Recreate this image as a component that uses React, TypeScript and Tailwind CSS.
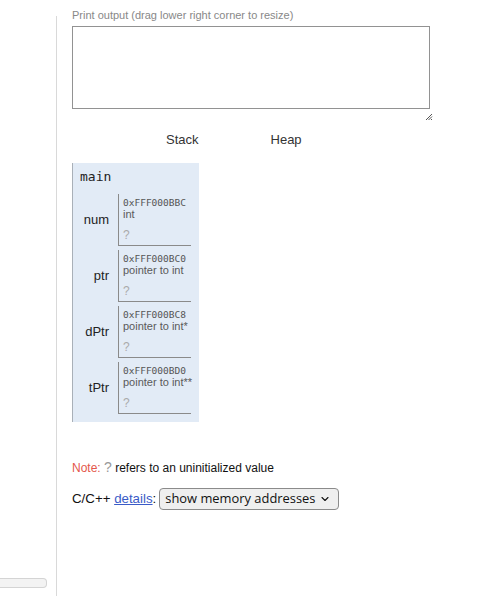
import { ChevronDown } from "lucide-react";

type Slot = {
  name: string;
  addr: string;
  type: string;
};

const slots: Slot[] = [
  { name: "num", addr: "0xFFF000BBC", type: "int" },
  { name: "ptr", addr: "0xFFF000BC0", type: "pointer to int" },
  { name: "dPtr", addr: "0xFFF000BC8", type: "pointer to int*" },
  { name: "tPtr", addr: "0xFFF000BD0", type: "pointer to int**" },
];

const sans = "font-['Liberation_Sans',Arial,sans-serif]";
const mono = "font-['DejaVu_Sans_Mono',monospace]";

function StackFrame() {
  return (
    <div className="w-[127px] bg-[#e2ebf6] border-l border-[#a9b0b8] pb-[8px]">
      <div className={`${mono} text-[13px] leading-[16px] text-[#222] pl-[7px] pt-[6px]`}>
        main
      </div>
      <div className="flex flex-col gap-[4px] mt-[9px]">
        {slots.map((s) => (
          <div key={s.name} className="flex items-center">
            <div className={`${sans} w-[45px] pr-[9px] text-right text-[13px] text-[#222]`}>
              {s.name}
            </div>
            <div className="w-[73px] h-[52px] border-l border-b border-[#8a8a8a] pl-[4px] pt-[3px]">
              <div className={`${mono} text-[9.5px] leading-[11px] text-[#555]`}>
                {s.addr}
              </div>
              <div className={`${sans} text-[11px] leading-[13px] text-[#5a5a5a] whitespace-nowrap`}>
                {s.type}
              </div>
              <div className={`${sans} text-[12px] leading-[14px] text-[#aaa] mt-[7px]`}>
                ?
              </div>
            </div>
          </div>
        ))}
      </div>
    </div>
  );
}

export default function App() {
  return (
    <div className={`${sans} flex h-[596px] w-[504px] overflow-hidden bg-white`}>
      <div className="w-[57px] shrink-0 mt-[16px] border-r border-[#d9d9d9] flex flex-col justify-end pb-[8px]">
        <div className="h-[10px] w-[47px] bg-[#f3f3f3] border border-l-0 border-[#d4d4d4] rounded-r-[4px]"></div>
      </div>

      <div className="pl-[15px] flex flex-col">
        <div className="text-[11px] leading-[13px] text-[#888] mt-[9px]">
          Print output (drag lower right corner to resize)
        </div>
        <div className="mt-[4px] w-[358px] h-[83px] border border-[#929292]"></div>
        <div className="w-[361px] flex justify-end mt-[4px] h-[8px]">
          <svg width="8" height="8" viewBox="0 0 8 8">
            <path d="M7 1 L1 7 M7 3.5 L3.5 7 M7 6 L6 7" stroke="#555" strokeWidth="1" />
          </svg>
        </div>

        <div className="flex text-[13px] leading-[15px] text-[#333] mt-[11px]">
          <div className="ml-[94px]">Stack</div>
          <div className="ml-[72px]">Heap</div>
        </div>

        <div className="mt-[16px]">
          <StackFrame />
        </div>

        <div className="mt-[38px] text-[12px] leading-[14px] text-[#111]">
          <span className="text-[#e4574c]">Note: </span>
          <span className="text-[#999] text-[14px]">?</span> refers to an uninitialized value
        </div>

        <div className="mt-[13px] flex items-center text-[13.3px] text-[#111]">
          <span>C/C++&nbsp;</span>
          <a href="#" className="text-[#3a5bc7] underline">
            details
          </a>
          <span>:</span>
          <div className="ml-[3px] h-[22px] w-[180px] border border-[#8b8b8b] rounded-[4px] bg-[#efefef] flex items-center pl-[5px] pr-[7px] font-['Open_Sans',sans-serif] text-[12.9px] text-[#111] whitespace-nowrap">
            <span className="flex-1">show memory addresses</span>
            <ChevronDown size={12} strokeWidth={2.2} className="shrink-0" />
          </div>
        </div>
      </div>
    </div>
  );
}
